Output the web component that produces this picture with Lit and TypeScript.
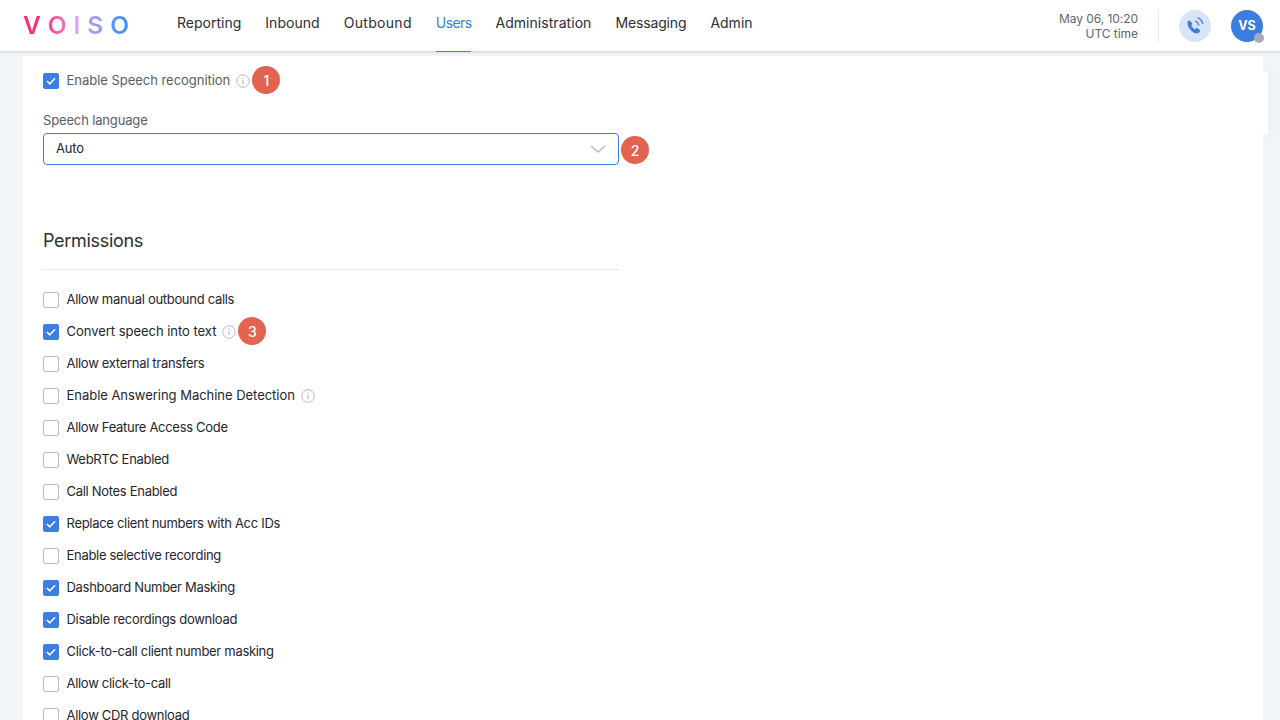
import { LitElement, html, css } from "lit";
import { customElement } from "lit/decorators.js";

const info = html`<svg class="info" viewBox="0 0 14 14" width="14" height="14" fill="none">
  <circle cx="7" cy="7" r="6.25" stroke="#b4b7bf" stroke-width="1"/>
  <path d="M7 6.2v4" stroke="#b4b7bf" stroke-width="1.2"/>
  <circle cx="7" cy="4.2" r=".75" fill="#b4b7bf"/>
</svg>`;

const perms: [string, boolean, boolean?, number?][] = [
  ["Allow manual outbound calls", false],
  ["Convert speech into text", true, true, 3],
  ["Allow external transfers", false],
  ["Enable Answering Machine Detection", false, true],
  ["Allow Feature Access Code", false],
  ["WebRTC Enabled", false],
  ["Call Notes Enabled", false],
  ["Replace client numbers with Acc IDs", true],
  ["Enable selective recording", false],
  ["Dashboard Number Masking", true],
  ["Disable recordings download", true],
  ["Click-to-call client number masking", true],
  ["Allow click-to-call", false],
  ["Allow CDR download", false],
];

@customElement("app-root")
export class AppRoot extends LitElement {
  static styles = css`
    :host {
      display: block;
      width: 1280px;
      height: 720px;
      overflow: hidden;
      background: #f3f6f8;
      font-family: Inter, "Liberation Sans", sans-serif;
      color: #24262e;
      position: relative;
    }
    header {
      height: 51px;
      background: #fff;
      box-shadow: 0 1px 3px rgba(30, 40, 60, 0.18);
      display: flex;
      align-items: center;
      padding: 0 17px 0 23px;
      position: relative;
      z-index: 2;
    }
    .logo {
      display: flex;
      width: 106px;
      margin-right: 48px;
      justify-content: space-between;
      font-size: 24.5px;
      font-weight: 600;
      line-height: 1;
    }
    .logo span {
      background-clip: text;
      -webkit-background-clip: text;
      color: transparent;
    }
    .logo span:nth-child(1) { background-image: linear-gradient(90deg, #f8307a, #fb2f72); }
    .logo span:nth-child(2) { background-image: linear-gradient(90deg, #f63f93, #ee79c4); }
    .logo span:nth-child(3) { background-image: linear-gradient(90deg, #dba0ee, #d9a4f0); }
    .logo span:nth-child(4) { background-image: linear-gradient(90deg, #b79bee, #8f9cf4); }
    .logo span:nth-child(5) { background-image: linear-gradient(90deg, #5a95f6, #4290f5); }
    nav {
      display: flex;
      gap: 24px;
      height: 100%;
      flex: 1;
    }
    nav a {
      font-size: 14px;
      line-height: 46px;
      height: 52px;
      box-sizing: border-box;
      color: #2c2e36;
    }
    nav a:nth-child(2) { letter-spacing: 0.05px; }
    nav a:nth-child(3) { letter-spacing: 0.3px; }
    nav a:nth-child(4) { letter-spacing: -0.6px; }
    nav a:nth-child(5) { letter-spacing: 0.05px; }
    nav a:nth-child(6) { letter-spacing: -0.15px; }
    nav a.on {
      color: #3c7de0;
      border-bottom: 1px solid #3c7de0;
    }
    .time {
      font-size: 12px;
      line-height: 15px;
      text-align: right;
      color: #62646e;
      padding: 1px 20px 1px 0;
      border-right: 1px solid #e4e6ea;
      margin-right: 20px;
      letter-spacing: -0.05px;
    }
    .phone {
      width: 32px;
      height: 32px;
      border-radius: 50%;
      background: #d8e4f8;
      margin-right: 20px;
      display: flex;
      align-items: center;
      justify-content: center;
    }
    .avatar {
      width: 32px;
      height: 32px;
      border-radius: 50%;
      background: #3c7de0;
      color: #fff;
      font-size: 12.5px;
      font-weight: 700;
      display: flex;
      align-items: center;
      justify-content: center;
      position: relative;
    }
    .avatar i {
      position: absolute;
      right: -1px;
      bottom: -1px;
      width: 10px;
      height: 10px;
      border-radius: 50%;
      background: #a8abc0;
    }
    main {
      position: relative;
      height: 669px;
    }
    .tab {
      position: absolute;
      left: 1250px;
      top: 20px;
      width: 18px;
      height: 64px;
      border-radius: 4px;
      background: #fff;
      box-shadow: 0 0 20px rgba(30, 40, 60, 0.05);
    }
    .card {
      position: absolute;
      left: 23px;
      top: 5px;
      width: 1240px;
      height: 700px;
      background: #fff;
      box-sizing: border-box;
      padding: 8px 20px 0;
    }
    .row {
      display: flex;
      align-items: center;
      height: 32px;
      font-size: 13px;
      letter-spacing: -0.3px;
      white-space: nowrap;
    }
    .row.tip { letter-spacing: -0.03px; }
    .box {
      width: 16px;
      height: 16px;
      box-sizing: border-box;
      border: 1px solid #b9bcc6;
      border-radius: 2px;
      margin: 2px 7.5px 0 0;
      flex: none;
      display: flex;
      align-items: center;
      justify-content: center;
      background: #fff;
    }
    .box.on {
      background: #3c7de0;
      border-color: #3c7de0;
    }
    .info { margin: 2px 0 0 6px; flex: none; }
    .badge {
      width: 28px;
      height: 28px;
      border-radius: 50%;
      background: #e26350;
      color: #fff;
      font-size: 14px;
      font-weight: 500;
      display: flex;
      align-items: center;
      justify-content: center;
      flex: none;
      letter-spacing: 0;
    }
    .row .badge { margin-left: 2px; }
    .selrow .badge { margin-top: 2px; }
    .first { color: #5a5c68; }
    .label {
      font-size: 13px;
      letter-spacing: -0.15px;
      color: #5a5c68;
      margin-top: 16px;
      line-height: 16px;
    }
    .selrow {
      display: flex;
      align-items: center;
      gap: 2px;
      margin-top: 5px;
    }
    .select {
      width: 576px;
      height: 32px;
      box-sizing: border-box;
      border: 1px solid #3c7de0;
      border-radius: 4px;
      padding: 0 12px 2px;
      font-size: 13px;
      letter-spacing: -0.2px;
      display: flex;
      align-items: center;
      justify-content: space-between;
    }
    .select svg { margin-top: 2px; }
    h2 {
      font-size: 18px;
      letter-spacing: -0.3px;
      font-weight: 400;
      margin: 65px 0 0;
      line-height: 22px;
      color: #2c2e36;
    }
    hr {
      width: 576px;
      margin: 17px 0 13px;
      border: 0;
      border-top: 1px solid #e4e6ea;
    }
    .list .row { width: fit-content; }
  `;

  private check(on: boolean) {
    return html`<span class="box ${on ? "on" : ""}">${on
      ? html`<svg width="10" height="8" viewBox="0 0 10 8" fill="none"><path d="M1 4l2.8 2.8L9 1.2" stroke="#fff" stroke-width="1.5"/></svg>`
      : ""}</span>`;
  }

  render() {
    return html`
      <header>
        <div class="logo"><span>V</span><span>O</span><span>I</span><span>S</span><span>O</span></div>
        <nav>
          <a>Reporting</a><a>Inbound</a><a>Outbound</a><a class="on">Users</a><a>Administration</a><a>Messaging</a><a>Admin</a>
        </nav>
        <div class="time">May 06, 10:20<br />UTC time</div>
        <div class="phone">
          <svg width="20" height="20" viewBox="0 0 20 20" fill="none">
            <path d="M3 5c.6-.7 1.6-.7 2.2-.1l1.8 2.2c.4.5.4 1.2 0 1.7l-.8.8c.6 1.3 2 2.9 3.6 3.7l1-.9c.5-.4 1.2-.4 1.7-.1l2 1.5c.7.5.8 1.5.2 2.1-1 1.1-2.3 1.8-3.7 1.4-3.8-1-7.5-5-8.3-8.9C2.5 7.2 2.3 6 3 5z" fill="#3c7de0"/>
            <path d="M10.6 5.2c1.6.7 2.8 2.1 3.2 3.9M12.8 1.8c2.4.9 4.2 3 4.9 5.6" stroke="#3c7de0" stroke-width="1.3" stroke-linecap="round"/>
          </svg>
        </div>
        <div class="avatar">VS<i></i></div>
      </header>
      <main>
        <div class="tab"></div>
        <div class="card">
          <div class="row first tip">${this.check(true)}<span>Enable Speech recognition</span>${info}<span class="badge">1</span></div>
          <div class="label">Speech language</div>
          <div class="selrow">
            <div class="select"><span>Auto</span>
              <svg width="16" height="8" viewBox="0 0 16 8" fill="none"><path d="M1 1l7 6 7-6" stroke="#b4b7bf" stroke-width="1.4"/></svg>
            </div>
            <span class="badge">2</span>
          </div>
          <h2>Permissions</h2>
          <hr />
          <div class="list">
            ${perms.map(
              ([t, on, i, b]) => html`<div class="row ${i ? "tip" : ""}">${this.check(on)}<span>${t}</span>${i ? info : ""}${b ? html`<span class="badge">${b}</span>` : ""}</div>`
            )}
          </div>
        </div>
      </main>
    `;
  }
}
